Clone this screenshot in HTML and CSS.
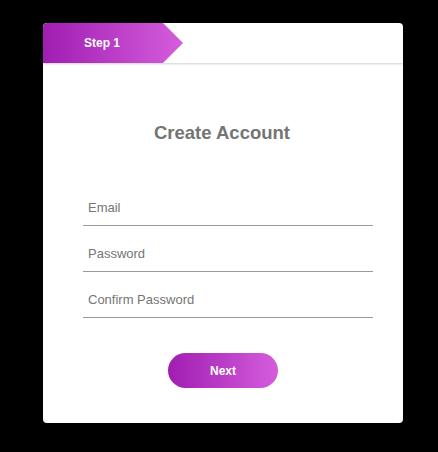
FILE: index.html
```html
<!DOCTYPE html>
<html lang="en">
<head>
<meta charset="utf-8">
<title>Create Account</title>
<link rel="stylesheet" href="styles.css">
</head>
<body>
<div class="card">
  <div class="card-header">
    <div class="step-tab">Step 1</div>
  </div>
  <form class="card-body">
    <h2 class="title">Create Account</h2>
    <input class="field" type="email" placeholder="Email">
    <input class="field" type="password" placeholder="Password">
    <input class="field" type="password" placeholder="Confirm Password">
    <button class="next-btn" type="button">Next</button>
  </form>
</div>
</body>
</html>
```

FILE: styles.css
```css
html, body {
  margin: 0;
  padding: 0;
  background: #000;
}
body {
  padding: 23px 0 0 43px;
  font-family: "Liberation Sans", Arial, sans-serif;
}
.card {
  width: 360px;
  height: 400px;
  background: #fff;
  border-radius: 4px;
  overflow: hidden;
  display: flex;
  flex-direction: column;
}
.card-header {
  height: 40px;
  flex: none;
  box-shadow: 0 1px 2px rgba(0, 0, 0, 0.18);
  position: relative;
  z-index: 1;
}
.step-tab {
  width: 140px;
  height: 40px;
  box-sizing: border-box;
  padding-right: 22px;
  background: linear-gradient(to right, #a01db1, #d45ddc);
  clip-path: polygon(0 0, 120px 0, 140px 50%, 120px 100%, 0 100%);
  color: #fff;
  font-weight: bold;
  font-size: 12px;
  line-height: 40px;
  text-align: center;
  border-top-left-radius: 4px;
}
.card-body {
  display: flex;
  flex-direction: column;
  align-items: center;
  padding: 0 30px 0 40px;
  margin: 0;
}
.title {
  margin: 59px 0 48px 0;
  font-size: 18.5px;
  line-height: 22px;
  font-weight: bold;
  color: #747474;
  text-align: center;
  position: relative;
  left: -6px;
}
.field {
  display: block;
  width: 290px;
  height: 34px;
  box-sizing: border-box;
  margin: 0 0 12px 0;
  padding: 0 5px 3px 5px;
  border: none;
  border-bottom: 1px solid #9a9a9a;
  outline: none;
  font-family: "Liberation Sans", Arial, sans-serif;
  font-size: 13px;
  color: #555;
  background: transparent;
}
.field::placeholder {
  color: #757575;
}
.next-btn {
  margin-top: 23px;
  width: 110px;
  height: 35px;
  border: none;
  border-radius: 18px;
  background: linear-gradient(to right, #a01db1, #d45ddc);
  color: #fff;
  font-family: "Liberation Sans", Arial, sans-serif;
  font-weight: bold;
  font-size: 12px;
  cursor: pointer;
  position: relative;
  left: -5px;
}
```
